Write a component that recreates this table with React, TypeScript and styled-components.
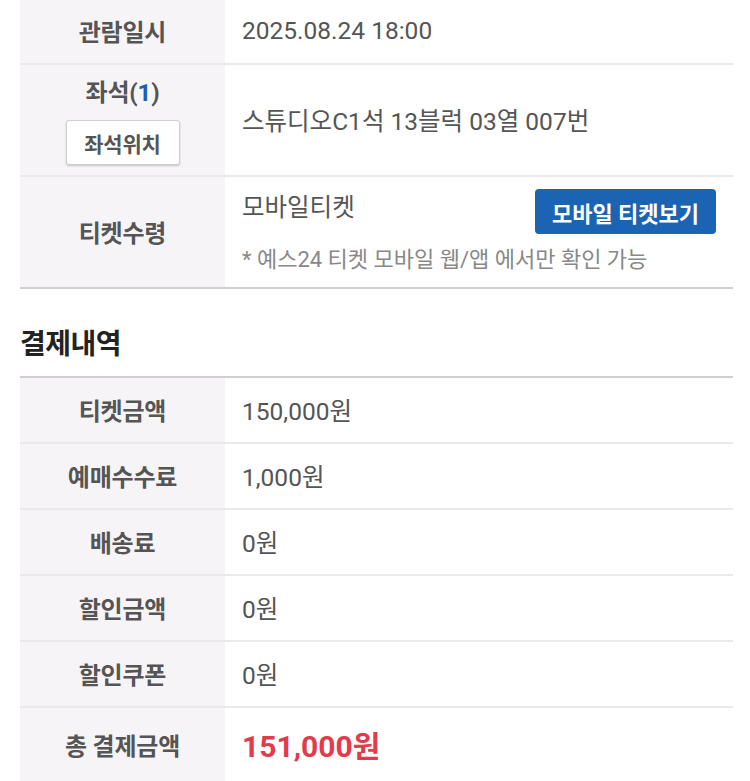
import React from "react";
import styled, { createGlobalStyle } from "styled-components";

const Global = createGlobalStyle`
  html, body { margin: 0; padding: 0; background: #fff; }
  body { font-family: Roboto, "Noto Sans CJK KR", sans-serif; -webkit-font-smoothing: antialiased; }
`;

const Page = styled.div`
  width: 750px;
  padding: 0 17px 0 20px;
  box-sizing: border-box;
  overflow: hidden;
  height: 781px;
`;

const Table = styled.div<{ $top?: boolean }>`
  display: flex;
  flex-direction: column;
  border-top: ${(p) => (p.$top ? "2px solid #d0d0d0" : "none")};
  border-bottom: 2px solid #d0d0d0;
`;

const Row = styled.div<{ $h: number; $last?: boolean }>`
  display: grid;
  grid-template-columns: 205px 1fr;
  height: ${(p) => p.$h}px;
  border-bottom: ${(p) => (p.$last ? "none" : "2px solid #ebe8ec")};
  box-sizing: border-box;
`;

const Label = styled.div<{ $gap?: number }>`
  background: #f7f4f8;
  display: flex;
  flex-direction: column;
  align-items: center;
  justify-content: center;
  gap: ${(p) => p.$gap ?? 0}px;
  font-size: 24px;
  font-weight: 700;
  color: #555;
  letter-spacing: -0.2px;
  padding-bottom: 2px;
`;

const Value = styled.div`
  display: flex;
  align-items: center;
  padding-left: 17px;
  padding-bottom: 2px;
  font-size: 24.5px;
  color: #555;
`;

const Blue = styled.span`
  color: #1a5fb0;
`;

const SmallBtn = styled.div`
  width: 114px;
  height: 45px;
  box-sizing: border-box;
  border: 1px solid #cfcfcf;
  border-radius: 3px;
  background: #fff;
  box-shadow: 0 1px 2px rgba(0, 0, 0, 0.2);
  display: flex;
  align-items: center;
  justify-content: center;
  font-size: 21px;
  font-weight: 700;
  color: #555;
`;

const Receive = styled.div`
  display: grid;
  grid-template-columns: 1fr auto;
  grid-template-rows: auto auto;
  padding: 12px 17px 0 17px;
  align-items: start;
`;

const ReceiveText = styled.div`
  font-size: 24.5px;
  color: #555;
  line-height: 1.2;
  padding-top: 4px;
`;

const BlueBtn = styled.div`
  width: 181px;
  height: 45px;
  background: #1b63b3;
  border-radius: 4px;
  color: #fff;
  font-size: 22px;
  font-weight: 700;
  display: flex;
  align-items: center;
  justify-content: center;
`;

const Note = styled.div`
  grid-column: 1 / span 2;
  font-size: 22px;
  color: #888;
  line-height: 1.2;
`;

const Heading = styled.h2`
  margin: 0;
  height: 87px;
  display: flex;
  align-items: center;
  padding-top: 18px;
  box-sizing: border-box;
  font-size: 28px;
  font-weight: 700;
  color: #222;
  letter-spacing: -0.5px;
`;

const Total = styled.span`
  color: #e33b4b;
  font-size: 30px;
  font-weight: 700;
`;

const pay: [string, string][] = [
  ["티켓금액", "150,000원"],
  ["예매수수료", "1,000원"],
  ["배송료", "0원"],
  ["할인금액", "0원"],
  ["할인쿠폰", "0원"],
];

export default function App() {
  return (
    <>
      <Global />
      <Page>
        <Table>
          <Row $h={65}>
            <Label>관람일시</Label>
            <Value>2025.08.24 18:00</Value>
          </Row>
          <Row $h={112}>
            <Label $gap={12}>
              <span>
                좌석(<Blue>1</Blue>)
              </span>
              <SmallBtn>좌석위치</SmallBtn>
            </Label>
            <Value>스튜디오C1석 13블럭 03열 007번</Value>
          </Row>
          <Row $h={110} $last>
            <Label>티켓수령</Label>
            <Receive>
              <ReceiveText>모바일티켓</ReceiveText>
              <BlueBtn>모바일 티켓보기</BlueBtn>
              <Note>* 예스24 티켓 모바일 웹/앱 에서만 확인 가능</Note>
            </Receive>
          </Row>
        </Table>
        <Heading>결제내역</Heading>
        <Table $top>
          {pay.map(([k, v]) => (
            <Row key={k} $h={66}>
              <Label>{k}</Label>
              <Value>{v}</Value>
            </Row>
          ))}
          <Row $h={74} $last>
            <Label>총 결제금액</Label>
            <Value>
              <Total>151,000원</Total>
            </Value>
          </Row>
        </Table>
      </Page>
    </>
  );
}
